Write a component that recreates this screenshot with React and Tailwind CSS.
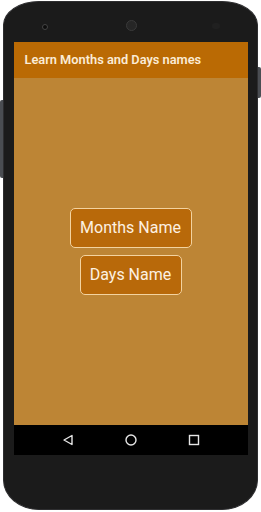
export default function App() {
  return (
    <div className="relative w-[261px] h-[512px] bg-white overflow-hidden" style={{ fontFamily: "Roboto, 'Liberation Sans', sans-serif" }}>
      <div className="absolute left-0 top-[100px] w-[4px] h-[78px] bg-[#4a4d52] rounded-l-[2px]" />
      <div className="absolute right-0 top-[67px] w-[4px] h-[31px] bg-[#4a4d52] rounded-r-[2px]" />
      <div className="relative ml-[3px] mt-[1px] w-[255px] h-[509px] bg-[#1b1b1b] border border-[#2e2e30] rounded-[36px_36px_36px_36px/24px_24px_30px_30px] flex flex-col items-center">
        <div className="absolute left-[38px] top-[22px] w-[6px] h-[6px] rounded-full bg-[#0d0d0d] border border-[#444]" />
        <div className="absolute left-[122px] top-[18px] w-[11px] h-[11px] rounded-full bg-[#262626] border border-[#3a3a3a]" />
        <div className="absolute left-[208px] top-[21px] w-[8px] h-[6px] rounded-full bg-[#202020]" />
        <div className="mt-[40px] w-[234px] flex flex-col">
          <div className="h-[36px] bg-[#ba6a04] flex items-center pl-[11px]">
            <span className="text-[12.8px] font-semibold text-[#fbecd6]">Learn Months and Days names</span>
          </div>
          <div className="h-[347px] bg-[#bd8535] flex flex-col items-center justify-center gap-[7px]">
            <div className="w-[122px] h-[40px] rounded-[5px] border border-[#f3d3a0] bg-[#b8690a] flex items-center justify-center text-[16px] text-[#fdf1e2]">Months Name</div>
            <div className="w-[102px] h-[40px] rounded-[5px] border border-[#f3d3a0] bg-[#b8690a] flex items-center justify-center text-[16px] text-[#fdf1e2]">Days Name</div>
          </div>
          <div className="h-[30px] bg-black flex items-center pl-[48px] gap-[51px]">
            <svg width="12" height="12" viewBox="0 0 12 12"><path d="M10 1.5 L2 6 L10 10.5 Z" fill="none" stroke="#e6e6e6" strokeWidth="1.4" strokeLinejoin="round" /></svg>
            <svg width="12" height="12" viewBox="0 0 12 12"><circle cx="6" cy="6" r="5" fill="none" stroke="#e6e6e6" strokeWidth="1.4" /></svg>
            <svg width="12" height="12" viewBox="0 0 12 12"><rect x="1.5" y="1.5" width="9" height="9" fill="none" stroke="#e6e6e6" strokeWidth="1.4" /></svg>
          </div>
        </div>
      </div>
    </div>
  );
}
